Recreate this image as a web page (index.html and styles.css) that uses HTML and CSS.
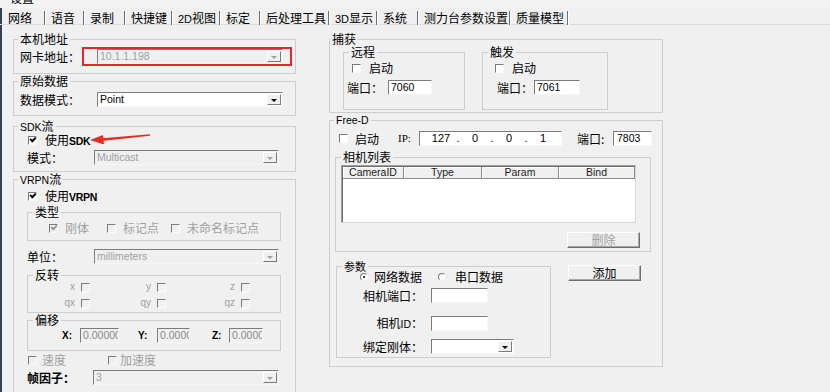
FILE: index.html
```html
<!DOCTYPE html>
<html lang="zh-CN">
<head>
  <meta charset="UTF-8">
  <title>设置</title>
  <link rel="stylesheet" href="styles.css">
</head>
<body>
<div class="window">
  <div class="caption"><span>设置</span></div>

  <div class="tabs">
    <span class="tab">网络</span>
    <span class="tab">语音</span>
    <span class="tab">录制</span>
    <span class="tab">快捷键</span>
    <span class="tab"><span class="en">2D</span>视图</span>
    <span class="tab">标定</span>
    <span class="tab">后处理工具</span>
    <span class="tab"><span class="en">3D</span>显示</span>
    <span class="tab">系统</span>
    <span class="tab">测力台参数设置</span>
    <span class="tab">质量模型</span>
  </div>

  <div class="main">
    <!-- coluna esquerda -->
    <div class="col-left">
      <fieldset class="grp g-local">
        <legend>本机地址</legend>
        <div class="row r-wide">
          <span class="lbl w77">网卡地址：</span>
          <div class="combo off w186">10.1.1.198<i class="arr"></i></div>
          <div class="hl"></div>
        </div>
      </fieldset>

      <fieldset class="grp g-raw">
        <legend>原始数据</legend>
        <div class="row r-wide">
          <span class="lbl w77">数据模式：</span>
          <div class="combo w186">Point<i class="arr"></i></div>
        </div>
      </fieldset>

      <fieldset class="grp g-sdk">
        <legend><span class="en">SDK</span>流</legend>
        <div class="row r-cb">
          <span class="cb on"></span><span class="cb-text">使用<span class="en b">SDK</span></span>
          <svg class="pointer" width="62" height="14" viewBox="0 0 62 14">
            <polygon points="12,11 60,5.7 60,4.3 12,8.2" fill="#ea2b23"/>
            <polygon points="0,10 14,14.5 13,5" fill="#ea2b23"/>
          </svg>
        </div>
        <div class="row r-mode">
          <span class="lbl w67">模式：</span>
          <div class="combo off w185">Multicast<i class="arr"></i></div>
        </div>
      </fieldset>

      <fieldset class="grp g-vrpn">
        <legend><span class="en">VRPN</span>流</legend>
        <div class="row r-cb r-vrpn">
          <span class="cb on"></span><span class="cb-text">使用<span class="en b">VRPN</span></span>
        </div>

        <fieldset class="grp sub g-type">
          <legend>类型</legend>
          <div class="row r-type">
            <span class="opt o1"><span class="cb on off"></span><span class="cb-text dim">刚体</span></span>
            <span class="opt o2"><span class="cb off"></span><span class="cb-text dim">标记点</span></span>
            <span class="opt"><span class="cb off"></span><span class="cb-text dim">未命名标记点</span></span>
          </div>
        </fieldset>

        <div class="row r-mode r-unit">
          <span class="lbl w67">单位：</span>
          <div class="combo off w185">millimeters<i class="arr"></i></div>
        </div>

        <fieldset class="grp sub g-flip">
          <legend>反转</legend>
          <div class="flip">
            <span class="axis"><span class="ax">x</span><span class="cb off"></span></span>
            <span class="axis"><span class="ax">y</span><span class="cb off"></span></span>
            <span class="axis"><span class="ax">z</span><span class="cb off"></span></span>
            <span class="axis"><span class="ax">qx</span><span class="cb off"></span></span>
            <span class="axis"><span class="ax">qy</span><span class="cb off"></span></span>
            <span class="axis"><span class="ax">qz</span><span class="cb off"></span></span>
          </div>
        </fieldset>

        <fieldset class="grp sub g-offset">
          <legend>偏移</legend>
          <div class="row r-offset">
            <span class="xyz lx">X:</span><span class="edit off ex">0.00000</span>
            <span class="xyz ly">Y:</span><span class="edit off ey">0.0000</span>
            <span class="xyz lz">Z:</span><span class="edit off ez">0.0000</span>
          </div>
        </fieldset>

        <div class="row r-cb r-speed">
          <span class="cb off"></span><span class="cb-text dim">速度</span>
          <span class="cb off acc"></span><span class="cb-text dim">加速度</span>
        </div>

        <div class="row r-mode r-frame">
          <span class="lbl w66 strong">帧因子：</span>
          <div class="combo off w186">3<i class="arr"></i></div>
        </div>
      </fieldset>
    </div>

    <!-- coluna direita -->
    <div class="col-right">
      <fieldset class="grp g-cap">
        <legend>捕获</legend>
        <div class="subs">
          <fieldset class="grp sub g-remote">
            <legend>远程</legend>
            <div class="row r-start"><span class="cb"></span><span class="cb-text">启动</span></div>
            <div class="row r-port">
              <span class="lbl">端口：</span><span class="edit">7060</span>
            </div>
          </fieldset>
          <fieldset class="grp sub g-trigger">
            <legend>触发</legend>
            <div class="row r-start"><span class="cb"></span><span class="cb-text">启动</span></div>
            <div class="row r-port">
              <span class="lbl">端口：</span><span class="edit">7061</span>
            </div>
          </fieldset>
        </div>
      </fieldset>

      <fieldset class="grp g-fd">
        <legend class="latin">Free-D</legend>
        <div class="row r-fd">
          <span class="cb"></span><span class="cb-text">启动</span>
          <span class="ip-lbl">IP:</span>
          <div class="ip">
            <span class="oct">127</span><span class="dot">.</span>
            <span class="oct">0</span><span class="dot">.</span>
            <span class="oct">0</span><span class="dot">.</span>
            <span class="oct">1</span>
          </div>
          <span class="port-lbl">端口:</span>
          <span class="edit e-fd">7803</span>
        </div>

        <fieldset class="grp sub g-cams">
          <legend>相机列表</legend>
          <div class="list">
            <div class="list-head">
              <span>CameraID</span><span>Type</span><span>Param</span><span>Bind</span>
            </div>
          </div>
          <div class="btn off b-del">删除</div>
        </fieldset>

        <div class="params-row">
          <fieldset class="grp sub g-param">
            <legend class="small">参数</legend>
            <div class="row r-radio">
              <span class="rd on"></span><span class="rd-text">网络数据</span>
              <span class="rd r2"></span><span class="rd-text t2">串口数据</span>
            </div>
            <div class="row r-p1">
              <span class="plbl">相机端口：</span><span class="edit e-p"></span>
            </div>
            <div class="row r-p2">
              <span class="plbl">相机<span class="en">ID</span>：</span><span class="edit e-p"></span>
            </div>
            <div class="row r-p3">
              <span class="plbl">绑定刚体：</span>
              <div class="combo w83"><i class="arr"></i></div>
            </div>
          </fieldset>
          <div class="btn b-add">添加</div>
        </div>
      </fieldset>
    </div>
  </div>
</div>
</body>
</html>
```

FILE: styles.css
```css
body {
  margin: 0;
  background-color: #f0f0f0;
  font-family: "Noto Sans CJK SC", "Noto Sans", sans-serif;
  font-size: 12px;
  line-height: 14px;
  color: #000;
  overflow: hidden;
}

.window {
  height: 392px;
  box-shadow: inset 2px 0 0 #36424f;
  overflow: hidden;
}

.en {
  font-family: "Liberation Sans", sans-serif;
  font-size: 10.5px;
}

.en.b { font-weight: bold; letter-spacing: -0.3px; }

/* barra de titulo cortada */
.caption {
  height: 8px;
  overflow: hidden;
  background-color: #f4f4f4;
}

.caption span {
  display: block;
  margin-top: -9px;
  padding-left: 10px;
}

/* abas */
.tabs {
  display: flex;
  height: 17px;
  padding: 3px 0 0 2px;
  box-sizing: border-box;
  border-bottom: 1px solid #dcdcdc;
}

.tab {
  height: 14px;
  padding-left: 6px;
  box-sizing: border-box;
  border-right: 1px solid #6e6e6e;
  box-shadow: 1px 0 0 #fff;
  white-space: nowrap;
}

.tab .en { font-size: 11px; }

.tab:nth-child(1) { width: 43px; }
.tab:nth-child(2) { width: 39px; }
.tab:nth-child(3) { width: 41px; }
.tab:nth-child(4) { width: 47px; }
.tab:nth-child(5) { width: 48px; }
.tab:nth-child(6) { width: 40px; }
.tab:nth-child(7) { width: 69px; }
.tab:nth-child(8) { width: 48px; }
.tab:nth-child(9) { width: 41px; }
.tab:nth-child(10) { width: 92px; }
.tab:nth-child(11) { width: 58px; }

.main {
  display: flex;
  gap: 33px;
  padding: 7px 0 0 13px;
}

.col-left { width: 283px; }
.col-right { width: 334px; }

/* group box */
.grp {
  position: relative;
  margin: 0;
  padding: 0;
  min-width: 0;
  border: 1px solid #cdcdcd;
  box-sizing: border-box;
}

.grp > legend {
  height: 14px;
  padding: 0 2px;
  margin-left: 4px;
  line-height: 14px;
}

.row {
  position: relative;
  display: flex;
  align-items: center;
  height: 15px;
}

.lbl { flex: none; white-space: nowrap; }
.w77 { width: 77px; }
.w67 { width: 67px; }
.w66 { width: 66px; }
.strong { font-weight: bold; }
.dim { color: #a0a0a0; }

/* combo box */
.combo {
  position: relative;
  flex: none;
  height: 15px;
  box-sizing: border-box;
  padding-left: 2px;
  background-color: #fff;
  border: 1px solid;
  border-color: #7c7c7c #f6f6f6 #f6f6f6 #7c7c7c;
  font: 10.5px/13px "Liberation Sans", sans-serif;
  white-space: nowrap;
}

.combo.off {
  background-color: #f0f0f0;
  color: #a0a0a0;
}

.w186 { width: 186px; }
.w185 { width: 185px; }
.w83 { width: 83px; }

.combo .arr {
  position: absolute;
  top: 1px;
  right: 1px;
  bottom: 1px;
  width: 14px;
  box-sizing: border-box;
  background-color: #f0f0f0;
  border: 1px solid;
  border-color: #fff #7c7c7c #7c7c7c #fff;
}

.combo .arr::after {
  content: "";
  position: absolute;
  left: 50%;
  top: 50%;
  margin: -1px 0 0 -3px;
  border: 3px solid transparent;
  border-top-color: #000;
  border-bottom: 0;
}

.combo.off .arr::after { border-top-color: #a0a0a0; }

/* checkbox */
.cb {
  position: relative;
  flex: none;
  width: 9px;
  height: 9px;
  box-sizing: border-box;
  background-color: #fff;
  border: 1px solid;
  border-color: #7a7a7a #fbfbfb #fbfbfb #7a7a7a;
}

.cb.off { background-color: #f0f0f0; }

.cb.on::after {
  content: "";
  position: absolute;
  left: 1px;
  top: 0;
  width: 4px;
  height: 2px;
  border-left: 2px solid #000;
  border-bottom: 2px solid #000;
  transform: rotate(-45deg);
}

.cb.on.off::after { border-color: #9a9a9a; }

.cb-text { margin-left: 8px; white-space: nowrap; }

/* esquerda */
.g-local { padding-bottom: 9px; }
.g-raw { padding-bottom: 8px; }
.r-wide { margin-top: 3px; padding-left: 6px; }
.g-raw .r-wide { margin-top: 4px; }

.hl {
  position: absolute;
  left: 68px;
  top: -2px;
  width: 210px;
  height: 19px;
  box-sizing: border-box;
  border: 2px solid #e8262a;
}

.g-sdk { margin-top: 3px; padding-bottom: 6px; }
.r-cb { height: 14px; padding-left: 14px; }
.r-mode { margin-top: 3px; padding-left: 13px; }

.pointer {
  position: absolute;
  left: 76px;
  top: -3px;
}

.g-vrpn { padding-bottom: 20px; }
.r-vrpn { margin-top: 3px; }

.sub > legend { margin-left: 5px; }

.g-type {
  width: 254px;
  margin: 2px 0 0 13px;
  padding-bottom: 5px;
}

.r-type { height: 14px; margin-top: 2px; padding-left: 21px; }
.opt { display: flex; align-items: center; }
.o1 { width: 58px; }
.o2 { width: 64px; }
.opt .cb-text { margin-left: 7px; }

.r-unit { margin-top: 8px; }

.g-flip {
  width: 254px;
  margin: 4px 0 0 13px;
  padding-bottom: 2px;
}

.flip {
  display: grid;
  grid-template-columns: 76px 84px auto;
  row-gap: 2px;
  margin: -2px 0 0 27px;
}

.axis {
  display: flex;
  align-items: center;
  height: 14px;
}

.ax {
  width: 20px;
  margin-right: 6px;
  text-align: right;
  font: 10px/14px "Liberation Sans", sans-serif;
  color: #a0a0a0;
}

.g-offset {
  width: 254px;
  margin: 0 0 0 13px;
  padding-bottom: 7px;
}

.r-offset { margin-top: 1px; padding-left: 34px; }

.xyz {
  flex: none;
  font: bold 10px/15px "Liberation Sans", sans-serif;
}

.lx { width: 18px; }
.ly { width: 19px; margin-left: 19px; }
.lz { width: 17px; margin-left: 22px; }

.edit {
  flex: none;
  display: block;
  height: 15px;
  box-sizing: border-box;
  padding-left: 2px;
  overflow: hidden;
  white-space: nowrap;
  background-color: #fff;
  border: 1px solid;
  border-color: #7c7c7c #f6f6f6 #f6f6f6 #7c7c7c;
  font: 10.5px/13px "Liberation Sans", sans-serif;
}

.edit.off {
  background-color: #f0f0f0;
  color: #8a8a8a;
}

.ex { width: 39px; }
.ey { width: 33px; }
.ez { width: 34px; }

.r-speed { margin-top: 2px; }
.r-speed .cb-text { margin-left: 5px; }
.acc { margin-left: 42px; }
.r-speed .acc + .cb-text { margin-left: 3px; }

.r-frame { margin-top: 3px; }

/* direita */
.g-cap { padding-bottom: 2px; }
.g-cap > legend { margin-left: 0; }

.subs {
  display: flex;
  gap: 17px;
  margin-top: -1px;
  padding-left: 13px;
}

.g-remote { width: 122px; padding-bottom: 14px; }
.g-trigger { width: 126px; padding-bottom: 14px; }

.r-start { height: 14px; margin-top: 2px; }
.r-port { margin-top: 5px; }

.g-remote .r-start { padding-left: 8px; }
.g-remote .r-port { padding-left: 3px; }
.g-remote .r-port .lbl { width: 41px; }
.g-remote .edit { width: 44px; }

.g-trigger .r-start { padding-left: 12px; }
.g-trigger .r-port { padding-left: 14px; }
.g-trigger .r-port .lbl { width: 37px; }
.g-trigger .edit { width: 46px; }

.g-fd { padding-bottom: 8px; }

.latin {
  font: 10.5px/14px "Liberation Sans", sans-serif;
}

.r-fd { margin-top: 4px; padding-left: 9px; }
.r-fd .cb-text { margin-left: 7px; }

.ip-lbl {
  width: 21px;
  margin-left: 19px;
  font: 11px/15px "Liberation Serif", serif;
}

.ip {
  display: flex;
  flex: none;
  width: 143px;
  height: 15px;
  box-sizing: border-box;
  padding-left: 8px;
  background-color: #fff;
  border: 1px solid;
  border-color: #7c7c7c #f6f6f6 #f6f6f6 #7c7c7c;
  font: 11px/13px "Liberation Sans", sans-serif;
}

.oct { width: 26px; text-align: center; }
.dot { width: 8px; text-align: center; }

.port-lbl { width: 36px; margin-left: 15px; }
.e-fd { width: 39px; padding-left: 3px; }

.g-cams {
  width: 316px;
  margin: 4px 0 0 5px;
  padding-bottom: 3px;
}

.list {
  width: 295px;
  height: 58px;
  margin: 1px 0 0 5px;
  box-sizing: border-box;
  background-color: #fff;
  border: 1px solid;
  border-color: #a0a0a0 #d8d8d8 #d8d8d8 #a0a0a0;
  box-shadow: inset 1px 1px 0 #6e6e6e;
}

.list-head {
  display: grid;
  grid-template-columns: 61px 78px 77px 76px;
  margin: 1px 0 0 1px;
  height: 12px;
}

.list-head span {
  box-sizing: border-box;
  background-color: #f0f0f0;
  border-right: 1px solid #8c8c8c;
  border-bottom: 1px solid #8c8c8c;
  box-shadow: inset 1px 1px 0 #fff;
  text-align: center;
  font: 10.5px/11px "Liberation Sans", sans-serif;
  color: #222;
}

.btn {
  width: 73px;
  height: 16px;
  box-sizing: border-box;
  background-color: #f0f0f0;
  border: 1px solid;
  border-color: #fff #6e6e6e #6e6e6e #fff;
  box-shadow: inset -1px -1px 0 #a8a8a8;
  text-align: center;
  line-height: 14px;
}

.btn.off { color: #a0a0a0; }

.b-del { margin: 9px 0 0 231px; }

.params-row {
  display: flex;
  align-items: flex-start;
  margin-top: 7px;
  padding-left: 6px;
}

.g-param { width: 215px; padding-bottom: 3px; }
.small { font-size: 11px; }

.b-add { margin: 6px 0 0 17px; }

.r-radio { height: 14px; margin-top: -3px; padding-left: 23px; }

.rd {
  position: relative;
  flex: none;
  width: 8px;
  height: 8px;
  box-sizing: border-box;
  border-radius: 50%;
  background-color: #fff;
  border: 1px solid;
  border-color: #7a7a7a #f4f4f4 #f4f4f4 #7a7a7a;
}

.rd.on::after {
  content: "";
  position: absolute;
  left: 2px;
  top: 2px;
  width: 2px;
  height: 2px;
  border-radius: 50%;
  background-color: #000;
}

.rd-text { margin-left: 6px; white-space: nowrap; }
.r2 { margin-left: 16px; }
.rd-text.t2 { margin-left: 9px; }

.plbl {
  width: 86px;
  margin-right: 8px;
  text-align: right;
  white-space: nowrap;
}

.e-p { width: 57px; }

.r-p1 { margin-top: 4px; }
.r-p2 { margin-top: 13px; }
.r-p3 { margin-top: 8px; }
```
